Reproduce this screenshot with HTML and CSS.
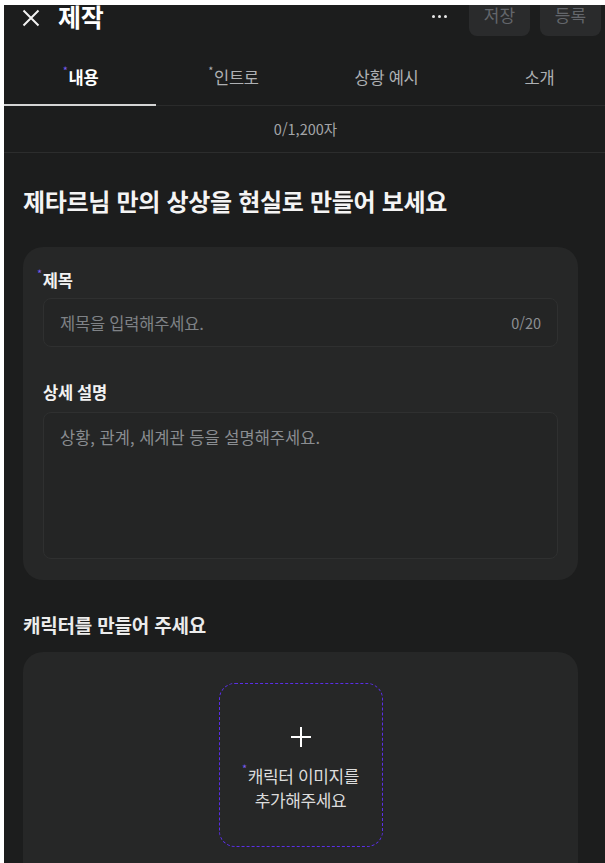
FILE: index.html
```html
<!DOCTYPE html>
<html lang="ko">
<head>
<meta charset="utf-8">
<title>제작</title>
<link rel="stylesheet" href="styles.css">
</head>
<body>
<div class="app">
  <header class="header">
    <div class="header-left">
      <svg class="close" width="18" height="18" viewBox="0 0 18 18"><path d="M1.5 1.5 L16.5 16.5 M16.5 1.5 L1.5 16.5" stroke="#f2f2f2" stroke-width="2" fill="none"/></svg>
      <h1 class="title">제작</h1>
    </div>
    <div class="header-right">
      <span class="more"><i></i><i></i><i></i></span>
      <button class="btn">저장</button>
      <button class="btn">등록</button>
    </div>
  </header>

  <nav class="tabs">
    <div class="tab active"><sup class="req">*</sup>내용</div>
    <div class="tab"><sup class="req gray">*</sup>인트로</div>
    <div class="tab">상황 예시</div>
    <div class="tab">소개</div>
  </nav>

  <div class="counter">0/1,200자</div>

  <main class="content">
    <h2 class="headline">제타르님 만의 상상을 현실로 만들어 보세요</h2>

    <section class="card">
      <div class="label"><sup class="req">*</sup>제목</div>
      <div class="input">
        <span class="ph">제목을 입력해주세요.</span>
        <span class="count">0/20</span>
      </div>
      <div class="label label-2">상세 설명</div>
      <div class="textarea">
        <span class="ph">상황, 관계, 세계관 등을 설명해주세요.</span>
      </div>
    </section>

    <h3 class="section-title">캐릭터를 만들어 주세요</h3>

    <section class="card card-2">
      <div class="upload">
        <svg class="plus" width="22" height="22" viewBox="0 0 22 22"><path d="M11 1 V21 M1 11 H21" stroke="#ffffff" stroke-width="2" fill="none"/></svg>
        <div class="upload-text"><sup class="req">*</sup>캐릭터 이미지를<br>추가해주세요</div>
      </div>
    </section>
  </main>
</div>
</body>
</html>
```

FILE: styles.css
```css
* { box-sizing: border-box; }

html, body {
  margin: 0;
  padding: 0;
  background: #ffffff;
}

body {
  font-family: "Noto Sans CJK KR", "Noto Sans", sans-serif;
  padding: 5px 0 0 4px;
}

.app {
  height: 858px;
  background: #1c1d1d;
  overflow: hidden;
  color: #e8e8e8;
}

.header {
  margin-top: -11px;
  height: 60px;
  padding: 0 4px 0 18px;
  display: flex;
  justify-content: space-between;
  align-items: flex-start;
}

.header-left {
  height: 44px;
  display: flex;
  align-items: center;
  gap: 18px;
}

.close { display: block; margin-top: 3px; }

.title {
  margin: 0;
  font-size: 25px;
  font-weight: 700;
  color: #ffffff;
  letter-spacing: -0.3px;
  line-height: 30px;
}

.header-right {
  height: 44px;
  display: flex;
  align-items: center;
  gap: 10px;
}

.more {
  display: flex;
  gap: 3px;
  margin-right: 12px;
}
.more i {
  width: 3px;
  height: 3px;
  border-radius: 50%;
  background: #e8e8e8;
  display: block;
}

.btn {
  width: 61px;
  height: 42px;
  border: none;
  border-radius: 8px;
  background: #2a2b2c;
  color: #63666b;
  font-family: inherit;
  font-size: 17px;
  padding: 0;
  margin-top: -3px;
  line-height: 42px;
}

.tabs {
  display: flex;
  width: 612px;
  height: 52px;
  border-bottom: 1px solid #2a2b2b;
}

.tab {
  width: 153px;
  flex: none;
  text-align: center;
  font-size: 16.5px;
  line-height: 22px;
  padding-top: 12px;
  color: #aeb0b3;
  position: relative;
  letter-spacing: -0.3px;
}

.tab.active {
  color: #ffffff;
  font-weight: 700;
}

.tab.active::after {
  content: "";
  position: absolute;
  left: 0;
  right: 1px;
  bottom: -1px;
  height: 2px;
  background: #d4d4d4;
}

.req {
  color: #7a5cf0;
  font-size: 11px;
  line-height: 11px;
  vertical-align: top;
  position: relative;
  top: -1px;
  font-weight: 400;
  margin-right: 1px;
}
.req.gray { color: #aeb0b3; }

.counter {
  height: 47px;
  border-bottom: 1px solid #2c2d2d;
  text-align: center;
  font-size: 14.5px;
  line-height: 46px;
  color: #a3a5a8;
  padding-left: 2px;
}

.content {
  padding: 0 27px 0 19px;
}

.headline {
  margin: 33px 0 31px;
  font-size: 24px;
  line-height: 30px;
  font-weight: 700;
  color: #f4f4f4;
  letter-spacing: -0.3px;
}

.card {
  background: #262727;
  border-radius: 20px;
  padding: 22px 20px 21px 20px;
}

.label {
  font-size: 16.5px;
  line-height: 22px;
  font-weight: 700;
  color: #f2f2f2;
  margin-left: -6px;
  margin-bottom: 7px;
  letter-spacing: -0.3px;
}

.label-2 {
  margin-left: 0;
  margin-top: 34px;
  margin-bottom: 9px;
}

.input {
  height: 49px;
  border: 1px solid #2f3030;
  border-radius: 8px;
  background: #242525;
  display: flex;
  align-items: center;
  justify-content: space-between;
  padding: 0 16px;
  font-size: 16.5px;
}

.ph {
  color: #7f8286;
  letter-spacing: -0.2px;
}

.count {
  color: #8c8f93;
  font-size: 14.5px;
}

.textarea {
  height: 147px;
  border: 1px solid #2f3030;
  border-radius: 8px;
  background: #242525;
  padding: 13px 16px;
  font-size: 16.5px;
  line-height: 22px;
}

.textarea .ph { letter-spacing: 0; color: #8a8d91; }

.section-title {
  margin: 34px 0 16px;
  font-size: 19px;
  line-height: 22px;
  font-weight: 700;
  color: #ececec;
  letter-spacing: -0.2px;
}

.card-2 {
  height: 260px;
  padding-top: 31px;
  display: flex;
  justify-content: center;
  align-items: flex-start;
  border-bottom-left-radius: 0;
  border-bottom-right-radius: 0;
}

.upload {
  width: 164px;
  height: 164px;
  border: 1px dashed #5a2fe6;
  border-radius: 16px;
  display: flex;
  flex-direction: column;
  align-items: center;
  padding-top: 42px;
}

.plus { display: block; }

.upload-text {
  margin-top: 16px;
  text-align: center;
  font-size: 17px;
  line-height: 24px;
  color: #dcdcdc;
  letter-spacing: -0.4px;
}
```
